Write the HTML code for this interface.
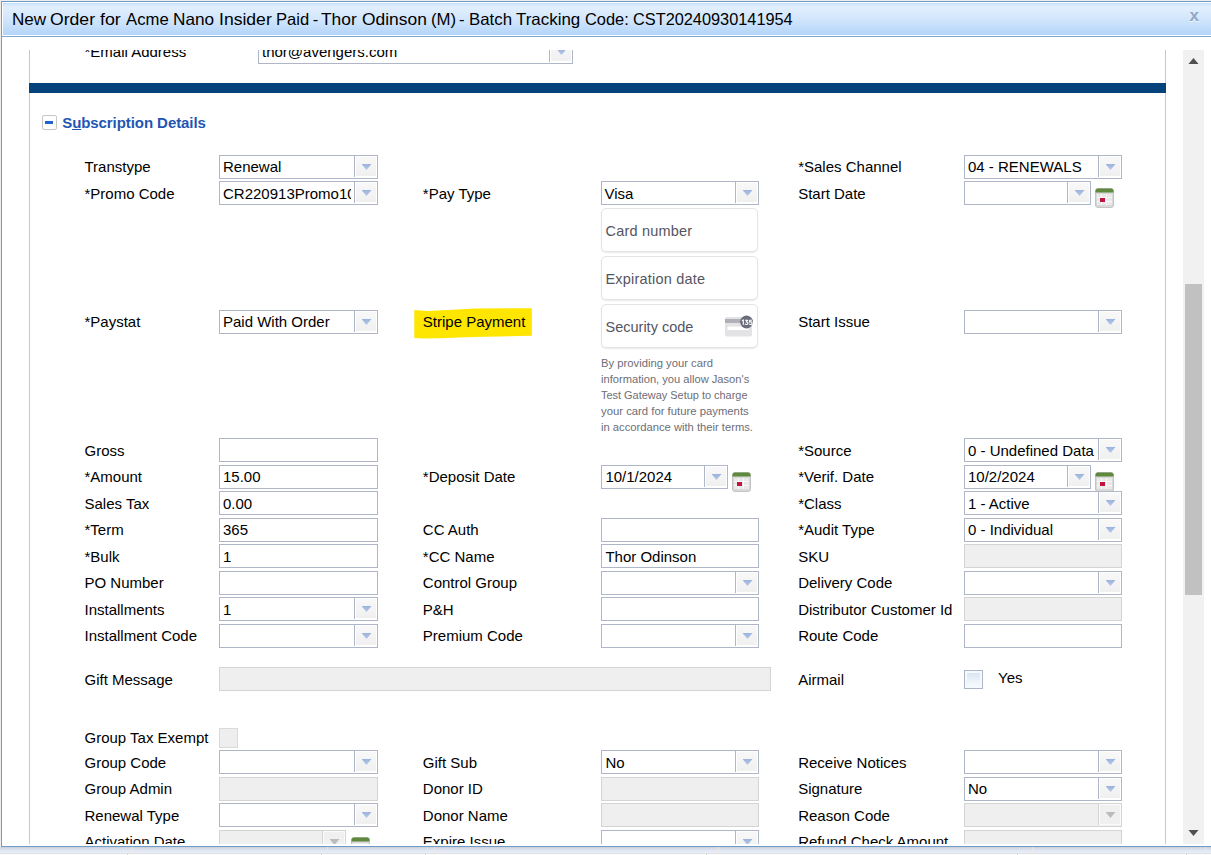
<!DOCTYPE html>
<html><head><meta charset="utf-8"><title>New Order</title>
<style>
*{box-sizing:border-box;margin:0;padding:0}
html,body{width:1211px;height:855px;overflow:hidden}
body{position:relative;background:#efeeee;font-family:"Liberation Sans",sans-serif;font-size:15px;color:#000}
.abs{position:absolute}
#under{position:absolute;left:0;top:847px;width:1211px;height:8px;background:linear-gradient(#c9cfd9 0,#d9e0ec 2px,#e6edf8 5px,#e8eef9 6px,#e1e1e1 6px,#e1e1e1 7px,#fcfcfc 7px)}
#under i{position:absolute;top:0;width:1px;height:6px;background:rgba(238,232,226,.75)}
#under b{position:absolute;top:7px;width:1px;height:1px;background:#cfcfcf}
#dlg{position:absolute;left:1px;top:1px;width:1215px;height:846px;border:1px solid #6f9bc6;background:#fff}
#tbar{position:absolute;left:1px;top:1px;width:1213px;height:32px;background:linear-gradient(#c5e0fb 0,#d6e9fc 2px,#e2effd 4px,#d2e6fc 50%,#c3defb 75%,#b3d5f9 100%)}
#tline{position:absolute;left:0;top:34px;width:1213px;height:1px;background:#7ea6d3}
.w{position:absolute;top:5px;height:24px;line-height:24px;font-size:16.5px;white-space:nowrap;color:#000;transform-origin:0 50%}
#close{position:absolute;left:1187.5px;top:3.6px;font-size:17px;font-weight:bold;color:#8ea6c8;line-height:20px;text-shadow:0 1px 0 #f4f8fd}
#view{position:absolute;left:0;top:50px;width:1211px;height:794px;overflow:hidden}
#panelL{position:absolute;left:29px;top:0;width:1px;height:794px;background:#c9c9c9}
#panelR{position:absolute;left:1165px;top:0;width:1px;height:794px;background:#c9c9c9}
#bluebar{position:absolute;left:29px;top:33px;width:1137px;height:10px;background:#06437c;z-index:2}
#track{position:absolute;left:1183px;top:0;width:21px;height:794px;background:#f1f1f1}
#thumb{position:absolute;left:1185px;top:234px;width:17px;height:311px;background:#c1c1c1}
.l{position:absolute;height:24px;line-height:24px;white-space:nowrap;font-size:15px}
.i{position:absolute;height:24px;width:159px;border:1px solid #afb6c8;background:#fff;line-height:22px;font-size:15px;padding-left:3px;white-space:nowrap;overflow:hidden}
.x{position:relative}
.d{background:#efefef;border-color:#d4d4d4}
.b{position:absolute;top:0;right:0;width:26px;height:22px;background:#fff}
.b:before{content:"";position:absolute;left:3px;top:0;width:1px;height:21px;background:#afb6c8}
.b:after{content:"";position:absolute;left:5px;top:1px;width:20px;height:19px;background:linear-gradient(#f8f8f8,#f0f0f0)}
.b i{position:absolute;left:10.5px;top:8px;width:10px;height:6px;background:linear-gradient(#9bb3dc,#b5c7e6);clip-path:polygon(0 0,100% 0,50% 100%);z-index:2}
.d .b{background:#efefef}
.d .b:before{background:#d4d4d4}
.d .b:after{box-shadow:0 0 0 1px #fbfbfb;background:#f0f0f0}
.d .b i{background:#bcbcbc}
.cal{position:absolute;width:19px;height:20px}
.chk{position:absolute;width:19px;height:19px;border:1px solid #adb6c8;background:#f6f9fc}
.chk:after{content:"";position:absolute;left:2px;top:2px;right:2px;bottom:2px;background:linear-gradient(#d9e5f1,#f7fafd)}
.chk.d{background:#eee;border-color:#dadada;height:20px}
.chk.d:after{display:none}
.s{position:absolute;left:601px;width:157px;height:44px;border:1px solid #e4e4e6;border-radius:5px;background:#fff;box-shadow:0 1px 2px rgba(0,0,0,.06),0 1px 1px rgba(0,0,0,.03);font-size:14.5px;letter-spacing:0.2px;color:#55555f;line-height:45px;padding-left:3.5px;white-space:nowrap}
.t{position:absolute;left:601px;font-size:11px;color:#6d6e78;line-height:16px;height:16px;white-space:nowrap;transform-origin:0 50%}
</style></head>
<body>
<div id="under"><i style="left:132px"></i><i style="left:327px"></i><i style="left:434px"></i><i style="left:718px"></i><i style="left:1032px"></i><i style="left:1205px"></i><b style="left:127px"></b><b style="left:321px"></b><b style="left:425px"></b><b style="left:706px"></b><b style="left:1017px"></b><b style="left:1186px"></b></div>
<div id="dlg">
<div id="tbar"></div>
<div id="tline"></div>
<div class="w" style="left:9.96px;transform:scaleX(1.035)">New</div><div class="w" style="left:48.23px;transform:scaleX(1.067)">Order</div><div class="w" style="left:97.72px;transform:scaleX(1.080)">for</div><div class="w" style="left:123.99px;transform:scaleX(1.012)">Acme</div><div class="w" style="left:171.36px;transform:scaleX(1.042)">Nano</div><div class="w" style="left:216.94px;transform:scaleX(1.065)">Insider</div><div class="w" style="left:273.60px;transform:scaleX(1.003)">Paid</div><div class="w" style="left:310.70px;transform:scaleX(1.000)">-</div><div class="w" style="left:319.45px;transform:scaleX(1.053)">Thor</div><div class="w" style="left:359.54px;transform:scaleX(1.055)">Odinson</div><div class="w" style="left:428.98px;transform:scaleX(1.017)">(M)</div><div class="w" style="left:457.00px;transform:scaleX(1.000)">-</div><div class="w" style="left:466.98px;transform:scaleX(1.020)">Batch</div><div class="w" style="left:514.48px;transform:scaleX(1.025)">Tracking</div><div class="w" style="left:583.20px;transform:scaleX(0.995)">Code:</div><div class="w" style="left:631.01px;transform:scaleX(0.989)">CST20240930141954</div>
<div id="close">x</div>
</div>
<div id="view">
<div id="panelL"></div><div id="panelR"></div>
<div id="bluebar"></div>
<div id="track"></div><div id="thumb"></div>
<svg class="abs" style="left:1188px;top:7px" width="11" height="8" viewBox="0 0 11 8"><path d="M0.5 7 L5.5 1 L10.5 7 Z" fill="#505050"/></svg>
<svg class="abs" style="left:1188px;top:779px" width="11" height="8" viewBox="0 0 11 8"><path d="M0.5 1 L5.5 7 L10.5 1 Z" fill="#505050"/></svg>
<div class="l" style="left:84.5px;top:-10px">*Email Address</div>
<div class="i " style="left:258px;top:-10px;width:315px"><span class="x" style="top:0px;left:0px">thor@avengers.com</span><span class="b"><i></i></span></div>
<div class="abs" style="left:42px;top:65px;width:15px;height:15px;border:1px solid #c6c6c6;border-radius:2px;background:#fff"><div class="abs" style="left:2.2px;top:5px;width:8.3px;height:2.6px;background:#1e62d0"></div></div>
<div class="l" style="left:62.2px;top:61px;font-weight:bold;color:#1f56b2;letter-spacing:-0.07px">S<span style="text-decoration:underline">u</span>bscription Details</div>
<div class="l" style="left:84.5px;top:105px">Transtype</div>
<div class="i " style="left:219px;top:105px;width:159px"><span class="x" style="top:0px;left:0px">Renewal</span><span class="b"><i></i></span></div>
<div class="l" style="left:84.5px;top:132px">*Promo Code</div>
<div class="i " style="left:219px;top:131px;width:159px"><span class="x" style="top:1px;left:0px">CR220913Promo10</span><span class="b"><i></i></span></div>
<div class="l" style="left:84.5px;top:260px">*Paystat</div>
<div class="i " style="left:219px;top:260px;width:159px"><span class="x" style="top:0px;left:0px">Paid With Order</span><span class="b"><i></i></span></div>
<div class="l" style="left:84.5px;top:389px">Gross</div>
<div class="i " style="left:219px;top:388px;width:159px"></div>
<div class="l" style="left:84.5px;top:415px">*Amount</div>
<div class="i " style="left:219px;top:415px;width:159px"><span class="x" style="top:0px;left:0px">15.00</span></div>
<div class="l" style="left:84.5px;top:442px">Sales Tax</div>
<div class="i " style="left:219px;top:441px;width:159px"><span class="x" style="top:1px;left:0px">0.00</span></div>
<div class="l" style="left:84.5px;top:468px">*Term</div>
<div class="i " style="left:219px;top:468px;width:159px"><span class="x" style="top:0px;left:0px">365</span></div>
<div class="l" style="left:84.5px;top:495px">*Bulk</div>
<div class="i " style="left:219px;top:494px;width:159px"><span class="x" style="top:1px;left:0px">1</span></div>
<div class="l" style="left:84.5px;top:521px">PO Number</div>
<div class="i " style="left:219px;top:521px;width:159px"></div>
<div class="l" style="left:84.5px;top:548px">Installments</div>
<div class="i " style="left:219px;top:547px;width:159px"><span class="x" style="top:1px;left:0px">1</span><span class="b"><i></i></span></div>
<div class="l" style="left:84.5px;top:574px">Installment Code</div>
<div class="i " style="left:219px;top:574px;width:159px"><span class="b"><i></i></span></div>
<div class="l" style="left:84.5px;top:618px">Gift Message</div>
<div class="i d" style="left:219px;top:617px;width:552px"></div>
<div class="l" style="left:84.5px;top:676px">Group Tax Exempt</div>
<div class="chk d" style="left:219px;top:678px"></div>
<div class="l" style="left:84.5px;top:701px">Group Code</div>
<div class="i " style="left:219px;top:700px;width:159px"><span class="b"><i></i></span></div>
<div class="l" style="left:84.5px;top:727px">Group Admin</div>
<div class="i d" style="left:219px;top:727px;width:159px"></div>
<div class="l" style="left:84.5px;top:754px">Renewal Type</div>
<div class="i " style="left:219px;top:753px;width:159px"><span class="b"><i></i></span></div>
<div class="l" style="left:84.5px;top:780px">Activation Date</div>
<div class="i d" style="left:219px;top:780px;width:127px"><span class="b"><i></i></span></div>
<svg class="cal" style="left:351px;top:787px" viewBox="0 0 19 20"><rect x="0.5" y="0.5" width="18" height="19" rx="2.5" fill="#d9d9d9" stroke="#c4c4c4"/><path d="M0.5 3 Q0.5 0.5 3 0.5 H16 Q18.5 0.5 18.5 3 V4.5 H0.5 Z" fill="#5f8a3e"/><rect x="2" y="6" width="15" height="11" fill="#e9e9e9"/><path d="M2 9.5H17M2 13.5H17M6.5 6V17M11.5 6V17" stroke="#f8f8f8" stroke-width="1"/><rect x="5" y="10" width="5" height="4" fill="#c2143f"/></svg>
<div class="l" style="left:422.8px;top:132px">*Pay Type</div>
<div class="i " style="left:601px;top:131px;width:158px"><span class="x" style="top:1px;left:-0.5px">Visa</span><span class="b"><i></i></span></div>
<svg class="abs" style="left:410px;top:254px" width="130" height="40" viewBox="0 0 130 40"><path d="M4.3 5.9 L16.4 6.9 L42.8 5.8 L64 4.6 L121.8 4.2 L121.8 31.7 L64 33 L29.6 34.3 L13.8 34.6 L4.3 33.9 Z" fill="#ffe600"/></svg>
<div class="l" style="left:422.8px;top:260px">Stripe Payment</div>
<div class="s" style="top:158px">Card number</div>
<div class="s" style="top:206px">Expiration date</div>
<div class="s" style="top:254px;letter-spacing:0">Security code<svg class="abs" style="left:120px;top:9.3px" width="34" height="24" viewBox="0 0 34 24"><rect x="3" y="3" width="27" height="19.5" rx="2" fill="#e3e3e6"/><rect x="3" y="5" width="27" height="4" fill="#b1b0b8"/><rect x="5.5" y="12.5" width="21" height="3.5" rx="0.5" fill="#fff"/><circle cx="24.5" cy="8" r="6.4" fill="#6b6c7c"/><path d="M19.9 6.9 L21.3 5.9 V10.7 M23 6.2 H25.7 L24.3 8 Q26 8 26 9.3 Q26 10.5 24.4 10.5 Q23.3 10.5 22.9 9.8 M30 6.2 H27.7 L27.5 8.1 Q28.1 7.8 28.7 7.8 Q30.1 7.8 30.1 9.2 Q30.1 10.5 28.6 10.5 Q27.6 10.5 27.2 9.8" fill="none" stroke="#fff" stroke-width="1.15" stroke-linejoin="round"/></svg></div>
<div class="t" style="top:305px;transform:scaleX(1.0224)">By providing your card</div>
<div class="t" style="top:321px;transform:scaleX(1.0123)">information, you allow Jason's</div>
<div class="t" style="top:337px;transform:scaleX(0.9939)">Test Gateway Setup to charge</div>
<div class="t" style="top:353px;transform:scaleX(1.0278)">your card for future payments</div>
<div class="t" style="top:369px;transform:scaleX(1.0188)">in accordance with their terms.</div>
<div class="l" style="left:422.8px;top:415px">*Deposit Date</div>
<div class="i " style="left:601px;top:415px;width:127px"><span class="x" style="top:0px;left:0.4px">10/1/2024</span><span class="b"><i></i></span></div>
<svg class="cal" style="left:732px;top:422px" viewBox="0 0 19 20"><rect x="0.5" y="0.5" width="18" height="19" rx="2.5" fill="#d9d9d9" stroke="#c4c4c4"/><path d="M0.5 3 Q0.5 0.5 3 0.5 H16 Q18.5 0.5 18.5 3 V4.5 H0.5 Z" fill="#5f8a3e"/><rect x="2" y="6" width="15" height="11" fill="#e9e9e9"/><path d="M2 9.5H17M2 13.5H17M6.5 6V17M11.5 6V17" stroke="#f8f8f8" stroke-width="1"/><rect x="5" y="10" width="5" height="4" fill="#c2143f"/></svg>
<div class="l" style="left:422.8px;top:468px">CC Auth</div>
<div class="i " style="left:601px;top:468px;width:158px"></div>
<div class="l" style="left:422.8px;top:495px">*CC Name</div>
<div class="i " style="left:601px;top:494px;width:158px"><span class="x" style="top:1px;left:0.4px">Thor Odinson</span></div>
<div class="l" style="left:422.8px;top:521px">Control Group</div>
<div class="i " style="left:601px;top:521px;width:158px"><span class="b"><i></i></span></div>
<div class="l" style="left:422.8px;top:548px">P&amp;H</div>
<div class="i " style="left:601px;top:547px;width:158px"></div>
<div class="l" style="left:422.8px;top:574px">Premium Code</div>
<div class="i " style="left:601px;top:574px;width:158px"><span class="b"><i></i></span></div>
<div class="l" style="left:422.8px;top:701px">Gift Sub</div>
<div class="i " style="left:601px;top:700px;width:158px"><span class="x" style="top:1px;left:0.4px">No</span><span class="b"><i></i></span></div>
<div class="l" style="left:422.8px;top:727px">Donor ID</div>
<div class="i d" style="left:601px;top:727px;width:158px"></div>
<div class="l" style="left:422.8px;top:754px">Donor Name</div>
<div class="i d" style="left:601px;top:753px;width:158px"></div>
<div class="l" style="left:422.8px;top:780px">Expire Issue</div>
<div class="i " style="left:601px;top:780px;width:158px"><span class="b"><i></i></span></div>
<div class="l" style="left:798.2px;top:105px">*Sales Channel</div>
<div class="i " style="left:964px;top:105px;width:158px"><span class="x" style="top:0px;left:0px">04 - RENEWALS</span><span class="b"><i></i></span></div>
<div class="l" style="left:798.2px;top:132px">Start Date</div>
<div class="i " style="left:964px;top:131px;width:127px"><span class="b"><i></i></span></div>
<svg class="cal" style="left:1095px;top:138px" viewBox="0 0 19 20"><rect x="0.5" y="0.5" width="18" height="19" rx="2.5" fill="#d9d9d9" stroke="#c4c4c4"/><path d="M0.5 3 Q0.5 0.5 3 0.5 H16 Q18.5 0.5 18.5 3 V4.5 H0.5 Z" fill="#5f8a3e"/><rect x="2" y="6" width="15" height="11" fill="#e9e9e9"/><path d="M2 9.5H17M2 13.5H17M6.5 6V17M11.5 6V17" stroke="#f8f8f8" stroke-width="1"/><rect x="5" y="10" width="5" height="4" fill="#c2143f"/></svg>
<div class="l" style="left:798.2px;top:260px">Start Issue</div>
<div class="i " style="left:964px;top:260px;width:158px"><span class="b"><i></i></span></div>
<div class="l" style="left:798.2px;top:389px">*Source</div>
<div class="i " style="left:964px;top:388px;width:158px"><span class="x" style="top:1px;left:0px">0 - Undefined Data</span><span class="b"><i></i></span></div>
<div class="l" style="left:798.2px;top:415px">*Verif. Date</div>
<div class="i " style="left:964px;top:415px;width:127px"><span class="x" style="top:0px;left:0px">10/2/2024</span><span class="b"><i></i></span></div>
<svg class="cal" style="left:1095px;top:422px" viewBox="0 0 19 20"><rect x="0.5" y="0.5" width="18" height="19" rx="2.5" fill="#d9d9d9" stroke="#c4c4c4"/><path d="M0.5 3 Q0.5 0.5 3 0.5 H16 Q18.5 0.5 18.5 3 V4.5 H0.5 Z" fill="#5f8a3e"/><rect x="2" y="6" width="15" height="11" fill="#e9e9e9"/><path d="M2 9.5H17M2 13.5H17M6.5 6V17M11.5 6V17" stroke="#f8f8f8" stroke-width="1"/><rect x="5" y="10" width="5" height="4" fill="#c2143f"/></svg>
<div class="l" style="left:798.2px;top:442px">*Class</div>
<div class="i " style="left:964px;top:441px;width:158px"><span class="x" style="top:1px;left:0px">1 - Active</span><span class="b"><i></i></span></div>
<div class="l" style="left:798.2px;top:468px">*Audit Type</div>
<div class="i " style="left:964px;top:468px;width:158px"><span class="x" style="top:0px;left:0px">0 - Individual</span><span class="b"><i></i></span></div>
<div class="l" style="left:798.2px;top:495px">SKU</div>
<div class="i d" style="left:964px;top:494px;width:158px"></div>
<div class="l" style="left:798.2px;top:521px">Delivery Code</div>
<div class="i " style="left:964px;top:521px;width:158px"><span class="b"><i></i></span></div>
<div class="l" style="left:798.2px;top:548px">Distributor Customer Id</div>
<div class="i d" style="left:964px;top:547px;width:158px"></div>
<div class="l" style="left:798.2px;top:574px">Route Code</div>
<div class="i " style="left:964px;top:574px;width:158px"></div>
<div class="l" style="left:798.2px;top:618px">Airmail</div>
<div class="chk" style="left:964px;top:620px"></div>
<div class="l" style="left:998px;top:616px">Yes</div>
<div class="l" style="left:798.2px;top:701px">Receive Notices</div>
<div class="i " style="left:964px;top:700px;width:158px"><span class="b"><i></i></span></div>
<div class="l" style="left:798.2px;top:727px">Signature</div>
<div class="i " style="left:964px;top:727px;width:158px"><span class="x" style="top:0px;left:0px">No</span><span class="b"><i></i></span></div>
<div class="l" style="left:798.2px;top:754px">Reason Code</div>
<div class="i d" style="left:964px;top:753px;width:158px"><span class="b"><i></i></span></div>
<div class="l" style="left:798.2px;top:780px">Refund Check Amount</div>
<div class="i d" style="left:964px;top:780px;width:158px"></div>
</div>
</body></html>
